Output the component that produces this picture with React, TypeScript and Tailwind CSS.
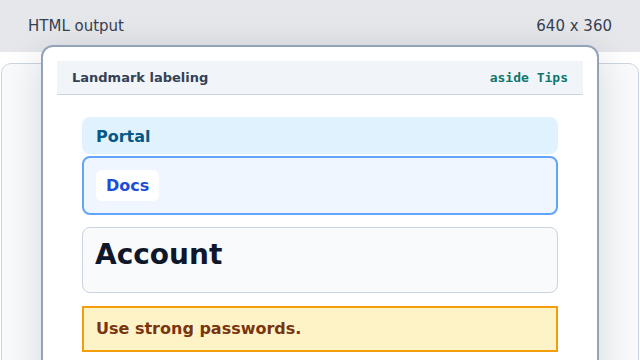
import React from "react";

export default function App() {
  const sans = { fontFamily: '"DejaVu Sans", "Liberation Sans", sans-serif' };
  return (
    <div className="relative h-[360px] w-[640px] overflow-hidden bg-white" style={sans}>
      <div className="flex h-[52px] items-center justify-between bg-[#e5e7eb] px-[28px] text-[15px] text-[#374151]">
        <span>HTML output</span>
        <span>640 x 360</span>
      </div>
      <div className="mx-[1px] mt-[11px] h-[320px] rounded-[10px] border border-[#cbd5e1] bg-[#f8fafc]" />
      <div className="absolute left-[41px] top-[45px] h-[340px] w-[558px] rounded-t-[12px] border-2 border-[#94a3b8] bg-white px-[14px] pt-[14px] shadow-[0_8px_40px_rgba(15,23,42,0.14)]">
        <div className="flex h-[34px] items-center justify-between border-b border-[#cbd5e1] bg-[#f1f5f9] px-[15px]">
          <span className="text-[13px] font-bold text-[#334155]">Landmark labeling</span>
          <span
            className="text-[13px] font-bold text-[#0f766e]"
            style={{ fontFamily: '"DejaVu Sans Mono", "Liberation Mono", monospace' }}
          >
            aside Tips
          </span>
        </div>
        <div className="flex flex-col px-[25px] pt-[22px]">
          <div className="rounded-[8px] bg-[#e0f2fe] px-[14px] pb-[8px] pt-[10px] text-[16px] font-bold leading-[19px] text-[#075985]">
            Portal
          </div>
          <div className="mt-[2px] flex rounded-[8px] border-2 border-[#60a5fa] bg-[#eff6ff] p-[12px]">
            <span className="rounded-[6px] bg-white px-[10px] py-[6px] text-[16px] font-bold leading-[19px] text-[#1d4ed8]">
              Docs
            </span>
          </div>
          <div className="mt-[12px] rounded-[8px] border border-[#cbd5e1] bg-[#f8fafc] px-[12px] pb-[17px] pt-[7px] text-[28px] font-bold leading-[40px] text-[#0f172a]">
            Account
          </div>
          <div className="mt-[13px] border-2 border-[#f59e0b] bg-[#fef3c7] px-[12px] py-[12px] text-[16px] font-bold leading-[18px] text-[#78350f]">
            Use strong passwords.
          </div>
        </div>
      </div>
    </div>
  );
}
